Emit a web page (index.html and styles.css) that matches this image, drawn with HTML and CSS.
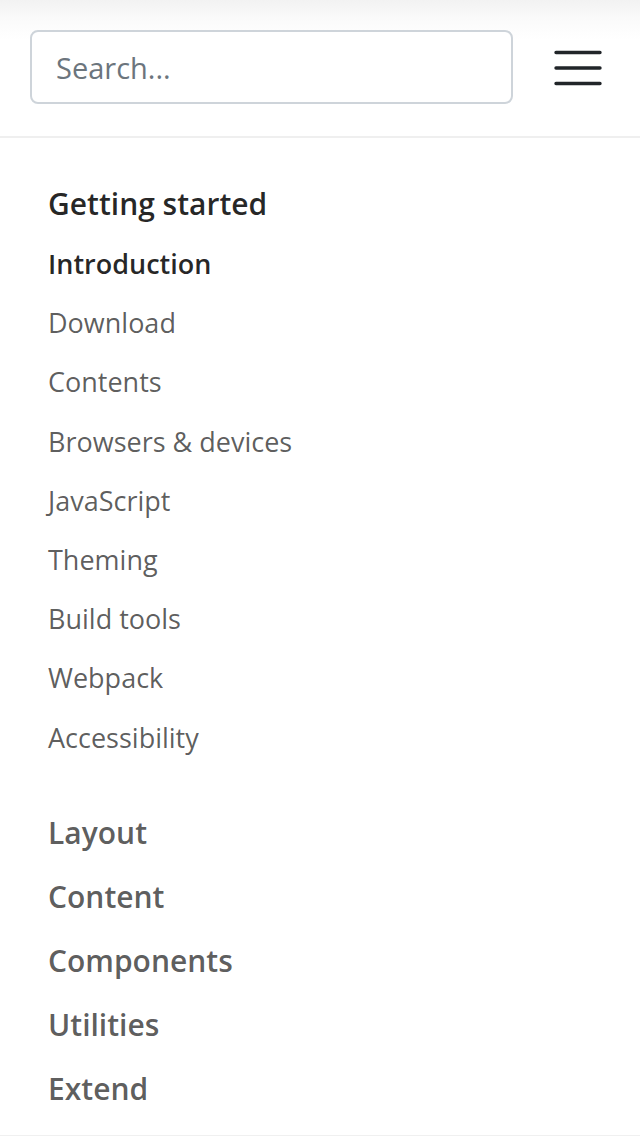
FILE: index.html
```html
<!DOCTYPE html>
<html lang="en">
<head>
<meta charset="utf-8">
<title>Docs sidebar</title>
<link rel="stylesheet" href="styles.css">
</head>
<body>
<div class="sidebar">
  <form class="search">
    <input class="search-input" type="search" placeholder="Search...">
    <button class="toggler" type="button" aria-label="Toggle docs navigation">
      <svg width="48" height="40" viewBox="0 0 48 40" aria-hidden="true">
        <path d="M2 5.5H46M2 21H46M2 36.5H46" stroke="#212529" stroke-width="3.4" stroke-linecap="round" fill="none"/>
      </svg>
    </button>
  </form>
  <nav class="links">
    <div class="toc-item active">
      <a class="toc-link" href="#">Getting started</a>
      <ul class="subnav">
        <li><a class="current" href="#">Introduction</a></li>
        <li><a href="#">Download</a></li>
        <li><a href="#">Contents</a></li>
        <li><a href="#">Browsers &amp; devices</a></li>
        <li><a href="#">JavaScript</a></li>
        <li><a href="#">Theming</a></li>
        <li><a href="#">Build tools</a></li>
        <li><a href="#">Webpack</a></li>
        <li><a href="#">Accessibility</a></li>
      </ul>
    </div>
    <div class="toc-item"><a class="toc-link" href="#">Layout</a></div>
    <div class="toc-item"><a class="toc-link" href="#">Content</a></div>
    <div class="toc-item"><a class="toc-link" href="#">Components</a></div>
    <div class="toc-item"><a class="toc-link" href="#">Utilities</a></div>
    <div class="toc-item"><a class="toc-link" href="#">Extend</a></div>
  </nav>
</div>
</body>
</html>
```
FILE: styles.css
```css
html, body {
  margin: 0;
  padding: 0;
  background: #fff;
}
body {
  font-family: "Open Sans", "Noto Sans", sans-serif;
  color: #212529;
  height: 1136px;
  overflow: hidden;
}
.sidebar {
  border-bottom: 1px solid #f0f0f0;
  height: 1135px;
  box-sizing: content-box;
}
.search {
  display: flex;
  align-items: center;
  gap: 41px;
  padding: 30px 38px 32px 30px;
  border-bottom: 2px solid #efefef;
  background: linear-gradient(to bottom, #f2f2f2 0px, #fafafa 18px, #fff 40px);
  margin: 0;
}
.search-input {
  flex: 1;
  height: 74px;
  box-sizing: border-box;
  border: 2px solid #ced4da;
  border-radius: 8px;
  padding: 0 24px;
  font-family: inherit;
  font-size: 29px;
  color: #495057;
  background: #fff;
  outline: none;
}
.search-input::placeholder {
  color: #6c757d;
}
.toggler {
  border: 0;
  background: transparent;
  padding: 0;
  margin: 0;
  width: 48px;
  height: 40px;
  display: flex;
}
.links {
  padding-top: 34px;
}
.toc-link {
  display: block;
  padding: 8px 48px;
  font-size: 30px;
  line-height: 48px;
  font-weight: 600;
  color: rgba(0, 0, 0, 0.65);
  text-decoration: none;
}
.toc-item.active > .toc-link {
  color: rgba(0, 0, 0, 0.85);
}
.subnav {
  list-style: none;
  margin: -2px 0 34px;
  padding: 0;
}
.subnav a {
  display: block;
  padding: 8px 48px;
  font-size: 27px;
  line-height: 43.2px;
  color: rgba(0, 0, 0, 0.65);
  text-decoration: none;
}
.subnav a.current {
  font-weight: 600;
  color: rgba(0, 0, 0, 0.85);
}
```
